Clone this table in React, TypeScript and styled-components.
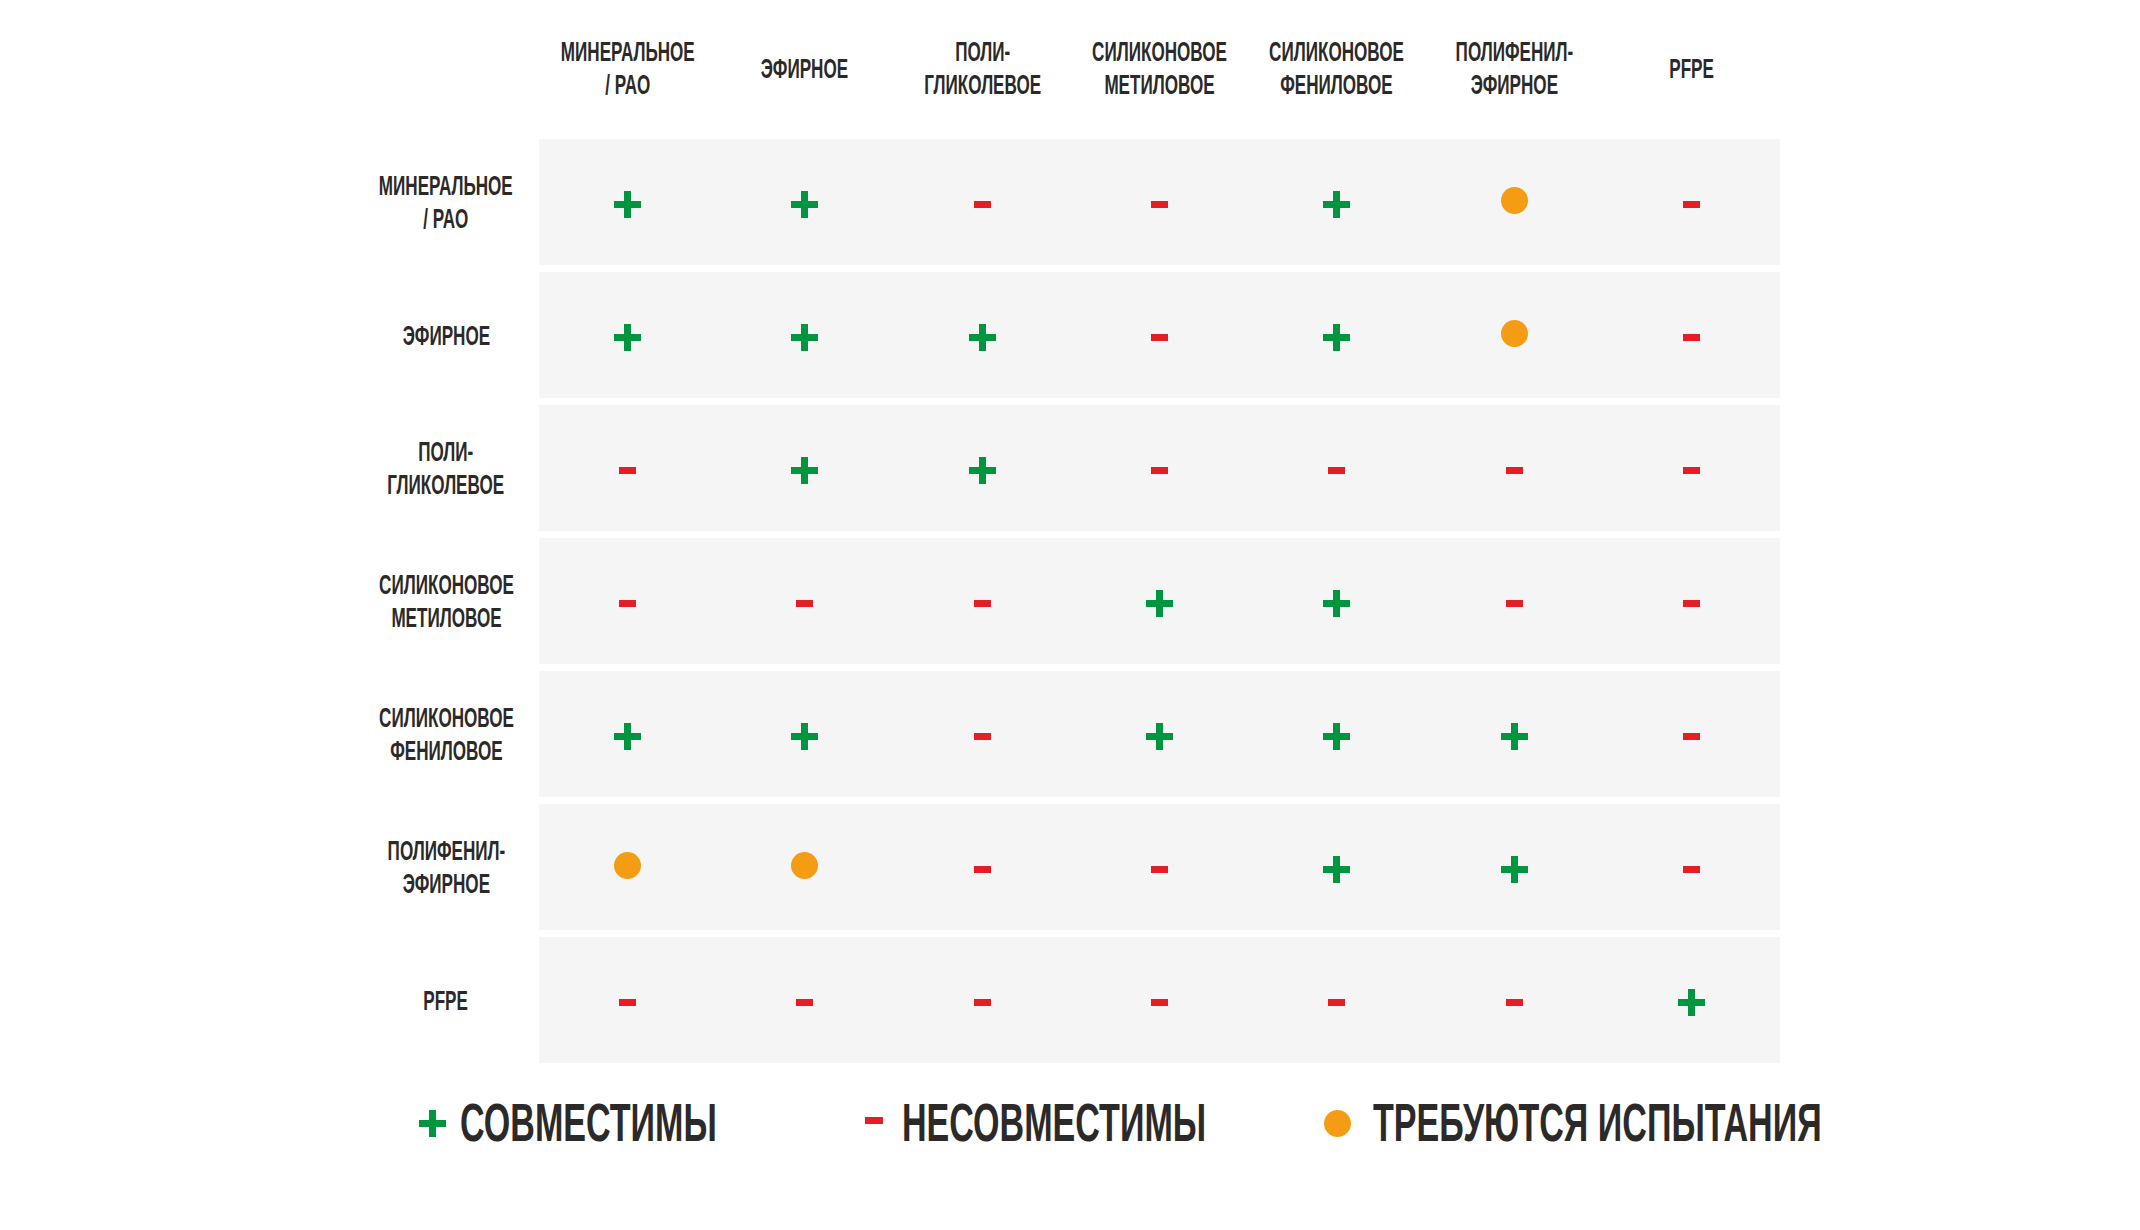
import React from "react";
import styled, { createGlobalStyle } from "styled-components";

type Mark = "+" | "-" | "o";

const GlobalStyle = createGlobalStyle`
  *, *::before, *::after { box-sizing: border-box; }
  html, body { margin: 0; padding: 0; background: #ffffff; }
  body { font-family: "Liberation Sans Narrow", "Liberation Sans", "DejaVu Sans Condensed", sans-serif; color: #2b2a29; }
`;

const Page = styled.div`
  width: 2140px;
  min-height: 1230px;
  background: #ffffff;
  padding-left: 353px;
`;

const Table = styled.div`
  display: flex;
  flex-direction: column;
  gap: 7px;
`;

const HeaderRow = styled.div`
  display: grid;
  grid-template-columns: 186px repeat(7, 177.3px);
  height: 132px;
  padding-top: 4px;
  align-items: center;
`;

const Row = styled.div`
  display: grid;
  grid-template-columns: 186px 1241px;
  height: 126px;
`;

const Band = styled.div`
  display: grid;
  grid-template-columns: repeat(7, 1fr);
  background: #f5f5f5;
  align-items: center;
`;

const LabelCell = styled.div`
  display: flex;
  justify-content: center;
  align-items: center;
`;

const LabelText = styled.span`
  display: inline-block;
  flex-shrink: 0;
  font-weight: 700;
  font-size: 28px;
  line-height: 33px;
  text-align: center;
  white-space: nowrap;
  transform: scaleX(0.61);
  transform-origin: center;
  color: #2b2a29;
`;

const Cell = styled.div`
  display: flex;
  justify-content: center;
  align-items: center;
  height: 100%;
`;

const Plus = styled.span`
  position: relative;
  display: inline-block;
  flex-shrink: 0;
  width: 27px;
  height: 27px;
  margin-top: 4px;
  &::before, &::after {
    content: "";
    position: absolute;
    background: #00963f;
  }
  &::before {
    left: 0;
    right: 0;
    top: 50%;
    height: 7px;
    margin-top: -3.5px;
  }
  &::after {
    top: 0;
    bottom: 0;
    left: 50%;
    width: 7px;
    margin-left: -3.5px;
  }
`;

const Minus = styled.span`
  display: inline-block;
  flex-shrink: 0;
  width: 17px;
  height: 7px;
  margin-top: 4px;
  background: #e31e25;
`;

const Dot = styled.span`
  display: inline-block;
  flex-shrink: 0;
  width: 27px;
  height: 27px;
  border-radius: 50%;
  background: #f39c14;
  margin-top: -3px;
`;

const Legend = styled.div`
  display: grid;
  grid-template-columns: 446px 459px auto;
  margin-top: 30px;
  padding-left: 66px;
  height: 60px;
  align-items: center;
`;

const LegendItem = styled.div<{ $gap: number }>`
  display: flex;
  align-items: center;
  gap: ${(p) => p.$gap}px;
  min-width: 0;
`;

const LegendText = styled.span`
  display: inline-block;
  flex-shrink: 0;
  font-weight: 700;
  font-size: 53px;
  line-height: 60px;
  white-space: nowrap;
  transform: scaleX(0.643);
  transform-origin: left center;
  color: #2b2a29;
`;

const LegendPlus = styled(Plus)`
  margin-top: 0;
`;

const LegendMinus = styled(Minus)`
  width: 18px;
  margin-top: -6px;
`;

const LegendDot = styled(Dot)`
  margin-top: 0;
`;

const headers: string[][] = [
  ["МИНЕРАЛЬНОЕ", "/ PAO"],
  ["ЭФИРНОЕ"],
  ["ПОЛИ-", "ГЛИКОЛЕВОЕ"],
  ["СИЛИКОНОВОЕ", "МЕТИЛОВОЕ"],
  ["СИЛИКОНОВОЕ", "ФЕНИЛОВОЕ"],
  ["ПОЛИФЕНИЛ-", "ЭФИРНОЕ"],
  ["PFPE"],
];

const matrix: Mark[][] = [
  ["+", "+", "-", "-", "+", "o", "-"],
  ["+", "+", "+", "-", "+", "o", "-"],
  ["-", "+", "+", "-", "-", "-", "-"],
  ["-", "-", "-", "+", "+", "-", "-"],
  ["+", "+", "-", "+", "+", "+", "-"],
  ["o", "o", "-", "-", "+", "+", "-"],
  ["-", "-", "-", "-", "-", "-", "+"],
];

const Label: React.FC<{ lines: string[] }> = ({ lines }) => (
  <LabelCell>
    <LabelText>
      {lines.map((l, i) => (
        <React.Fragment key={i}>
          {i > 0 && <br />}
          {l}
        </React.Fragment>
      ))}
    </LabelText>
  </LabelCell>
);

const Symbol: React.FC<{ mark: Mark }> = ({ mark }) => {
  if (mark === "+") return <Plus />;
  if (mark === "-") return <Minus />;
  return <Dot />;
};

export default function App() {
  return (
    <>
      <GlobalStyle />
      <Page>
        <Table>
          <HeaderRow>
            <div />
            {headers.map((h, i) => (
              <Label key={i} lines={h} />
            ))}
          </HeaderRow>
          {matrix.map((row, r) => (
            <Row key={r}>
              <Label lines={headers[r]} />
              <Band>
                {row.map((m, c) => (
                  <Cell key={c}>
                    <Symbol mark={m} />
                  </Cell>
                ))}
              </Band>
            </Row>
          ))}
        </Table>
        <Legend>
          <LegendItem $gap={14}>
            <LegendPlus />
            <LegendText>СОВМЕСТИМЫ</LegendText>
          </LegendItem>
          <LegendItem $gap={19}>
            <LegendMinus />
            <LegendText>НЕСОВМЕСТИМЫ</LegendText>
          </LegendItem>
          <LegendItem $gap={22}>
            <LegendDot />
            <LegendText>ТРЕБУЮТСЯ ИСПЫТАНИЯ</LegendText>
          </LegendItem>
        </Legend>
      </Page>
    </>
  );
}
